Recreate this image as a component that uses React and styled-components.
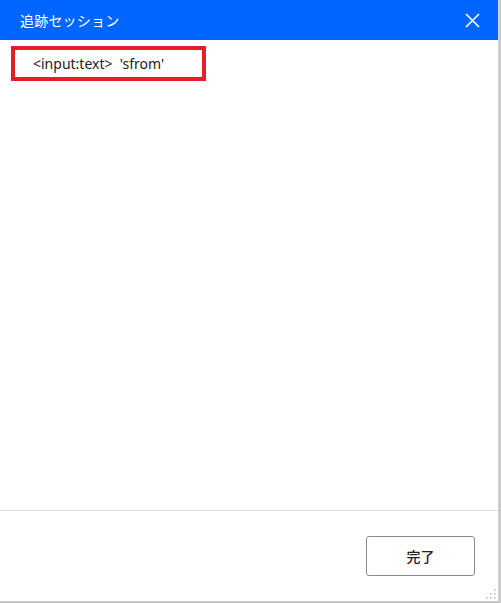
import React from "react";
import styled, { createGlobalStyle } from "styled-components";

const Global = createGlobalStyle`
  html, body {
    margin: 0;
    padding: 0;
    background: #c8c8c8;
    font-family: "Noto Sans", "Open Sans", "Noto Sans CJK JP", sans-serif;
  }
`;

const Dialog = styled.div`
  width: 499px;
  height: 601px;
  background: #ffffff;
  display: flex;
  flex-direction: column;
  position: relative;
  border-right: 1px solid #d4d4d4;
  box-sizing: border-box;
`;

const Header = styled.div`
  height: 40px;
  background: #0066ff;
  color: #ffffff;
  display: flex;
  align-items: center;
  justify-content: space-between;
  padding: 0 17px 0 20px;
  flex-shrink: 0;
`;

const Title = styled.div`
  font-family: "Noto Sans CJK JP", sans-serif;
  font-size: 14px;
  letter-spacing: 0.2px;
`;

const Close = styled.button`
  background: none;
  border: none;
  padding: 0;
  width: 18px;
  height: 18px;
  display: flex;
  align-items: center;
  justify-content: center;
  cursor: pointer;
`;

const Body = styled.div`
  flex: 1;
  padding: 6px 0 0 11px;
`;

const Highlight = styled.div`
  width: 195px;
  height: 35px;
  box-sizing: border-box;
  border: 4px solid #e3202a;
  display: flex;
  align-items: center;
  padding-left: 18px;
  font-size: 14px;
  color: #222;
  white-space: pre;
`;

const Footer = styled.div`
  height: 91px;
  border-top: 1px solid #e2e2e2;
  display: flex;
  justify-content: flex-end;
  align-items: flex-start;
  padding: 25px 23px 0 0;
  box-sizing: border-box;
  flex-shrink: 0;
`;

const Button = styled.button`
  width: 109px;
  height: 40px;
  background: #ffffff;
  border: 1px solid #8a8a8a;
  border-radius: 3px;
  font-family: "Noto Sans CJK JP", sans-serif;
  font-size: 14px;
  font-weight: 500;
  color: #222;
  cursor: pointer;
`;

const Grip = styled.svg`
  position: absolute;
  right: 2px;
  bottom: 2px;
`;

export default function App() {
  return (
    <>
      <Global />
      <Dialog>
        <Header>
          <Title>追跡セッション</Title>
          <Close aria-label="close">
            <svg width="15" height="15" viewBox="0 0 15 15">
              <path d="M1 1 L14 14 M14 1 L1 14" stroke="#fff" strokeWidth="1.6" />
            </svg>
          </Close>
        </Header>
        <Body>
          <Highlight>{"<input:text>  'sfrom'"}</Highlight>
        </Body>
        <Footer>
          <Button>完了</Button>
        </Footer>
        <Grip width="12" height="12" viewBox="0 0 12 12">
          {[[10, 2], [10, 6], [6, 6], [10, 10], [6, 10], [2, 10]].map(([x, y], i) => (
            <rect key={i} x={x} y={y} width="1.5" height="1.5" fill="#bbb" />
          ))}
        </Grip>
      </Dialog>
    </>
  );
}
